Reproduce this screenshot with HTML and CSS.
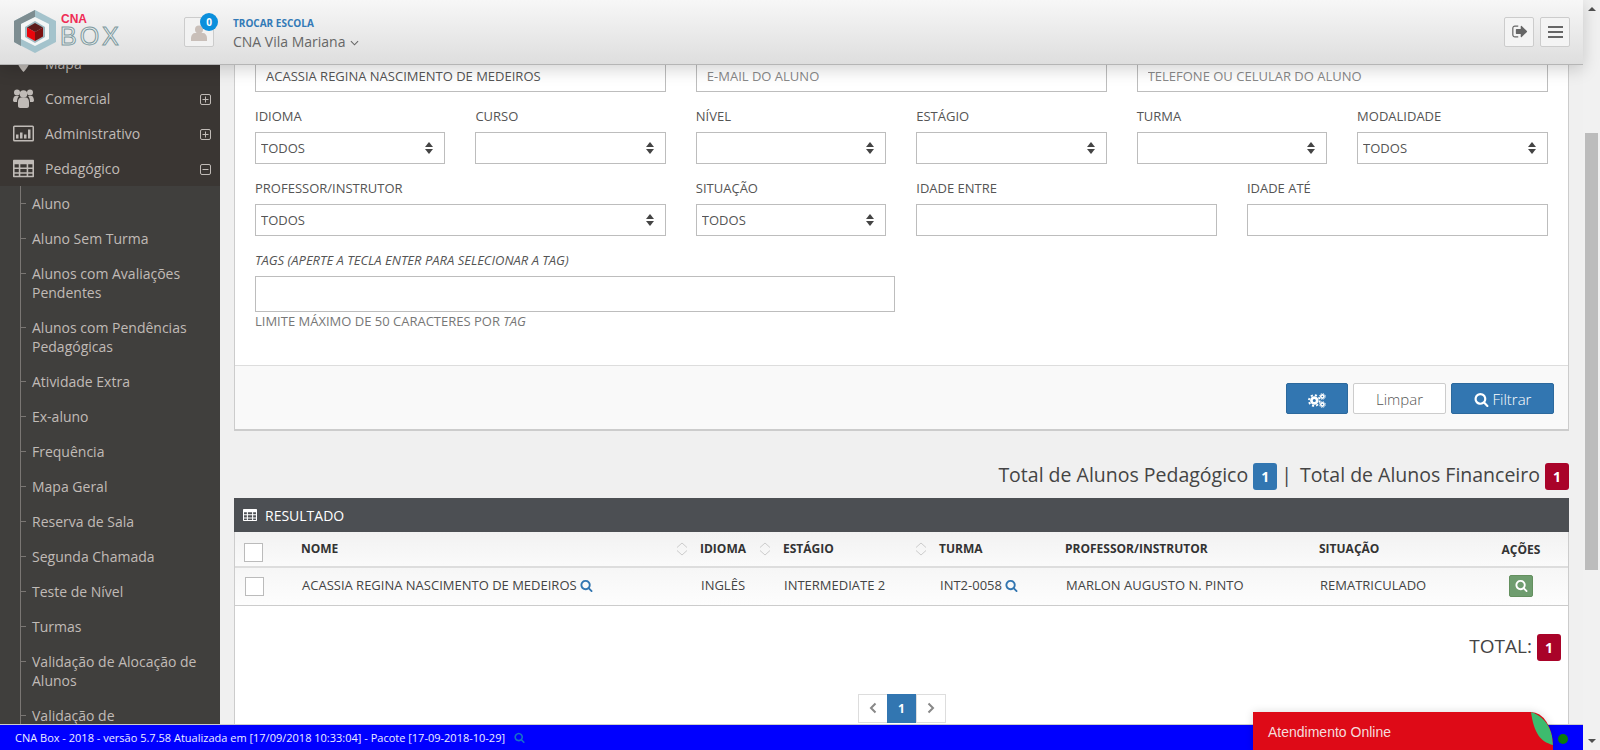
FILE: index.html
```html
<!DOCTYPE html>
<html lang="pt-BR">

<head>
    <meta charset="UTF-8">
    <title>CNA Box</title>
    <link rel="stylesheet" href="styles.css">
</head>

<body>
    <!-- Icon set -->
    <svg class="icon-defs" aria-hidden="true">
        <symbol id="i-search" viewBox="0 0 1792 1792"><path d="M1216 832q0-185-131.500-316.500t-316.500-131.500-316.500 131.500-131.500 316.500 131.500 316.500 316.500 131.500 316.500-131.500 131.500-316.500zm512 832q0 52-38 90t-90 38q-54 0-90-38l-343-342q-179 124-399 124-143 0-273.500-55.500t-225-150-150-225-55.500-273.500 55.500-273.500 150-225 225-150 273.500-55.500 273.500 55.500 225 150 150 225 55.500 273.500q0 220-124 399l343 343q37 37 37 90z"/></symbol>
        <symbol id="i-table" viewBox="0 0 20 17"><path fill-rule="evenodd" d="M1 0h18a1 1 0 0 1 1 1v15a1 1 0 0 1-1 1H1a1 1 0 0 1-1-1V1a1 1 0 0 1 1-1zm.5 4.500v3h4v-3zm5.500 0v3h6v-3zm7.500 0v3h4v-3zm-13 4.500v3h4V9zm5.500 0v3h6V9zm7.500 0v3h4V9zm-13 4.500v2h4v-2zm5.500 0v2h6v-2zm7.500 0v2h4v-2z"/></symbol>
        <symbol id="i-sort" viewBox="0 0 12 14"><path d="M1 5.500 6 1l5 4.500M1 8.500l5 4.500 5-4.500" fill="none" stroke="#ccc"/></symbol>
        <symbol id="i-tree-plus" viewBox="0 0 11 11"><rect x=".5" y=".5" width="10" height="10" rx="1.500" fill="none" stroke="currentColor"/><path d="M2.500 5.500h6M5.500 2.500v6" stroke="currentColor"/></symbol>
        <symbol id="i-tree-minus" viewBox="0 0 11 11"><rect x=".5" y=".5" width="10" height="10" rx="1.500" fill="none" stroke="currentColor"/><path d="M2.500 5.500h6" stroke="currentColor"/></symbol>
    </svg>

    <div class="window">
        <div class="page">
            <header class="topbar">
                <div class="logo">
                    <svg class="logo-mark" viewBox="0 0 42 43">
                        <polygon points="21,0 42,11 42,32 21,43 0,32 0,11" fill="#a4c3cc"/>
                        <polygon points="21,0 0,11 0,32 7,36 7,14 21,7" fill="#7d8d91"/>
                        <polygon points="21,7 35,14 35,29 21,36 7,29 7,14" fill="#f4f6f6"/>
                        <polygon points="21,11 31,17 31,27 21,33 11,27 11,17" fill="#9db8c0"/>
                        <polygon points="21,13 29,17.500 21,22 13,17.500" fill="#5c1c1c"/>
                        <polygon points="13,17.500 21,22 21,31 13,26.500" fill="#e8060c"/>
                        <polygon points="29,17.500 21,22 21,31 29,26.500" fill="#7c1010"/>
                    </svg>
                    <div class="logo-text">
                        <span class="logo-cna">CNA</span>
                        <span class="logo-box">BOX</span>
                    </div>
                </div>
                <div class="avatar">
                    <svg viewBox="0 0 16 16" class="avatar-icon"><circle cx="8" cy="4.500" r="4"/><path d="M0 16v-3c0-3 2-5 4-5h8c2 0 4 2 4 5v3z"/></svg>
                    <span class="avatar-badge">0</span>
                </div>
                <div class="school">
                    <a class="school-link">TROCAR ESCOLA</a>
                    <div class="school-name">CNA Vila Mariana
                        <svg viewBox="0 0 10 6" class="school-caret"><path d="M1 1l4 4 4-4" fill="none" stroke="#666" stroke-width="1.200"/></svg>
                    </div>
                </div>
                <div class="topbar-actions">
                    <button class="top-btn">
                        <svg viewBox="0 0 1664 1792" class="top-icon"><path d="M704 1440q0 4 1 20t.5 26.500-3 23.500-10 19.500-20.500 6.500h-320q-119 0-203.500-84.500t-84.500-203.500v-704q0-119 84.500-203.500t203.500-84.500h320q13 0 22.500 9.500t9.500 22.500q0 4 1 20t.5 26.500-3 23.500-10 19.500-20.500 6.500h-320q-66 0-113 47t-47 113v704q0 66 47 113t113 47h312l11.500 1 11.500 3 8 5.500 7 9 2 13.500zm928-544q0 26-19 45l-544 544q-19 19-45 19t-45-19-19-45v-288h-448q-26 0-45-19t-19-45v-384q0-26 19-45t45-19h448v-288q0-26 19-45t45-19 45 19l544 544q19 19 19 45z"/></svg>
                    </button>
                    <button class="top-btn">
                        <span class="burger"><i></i><i></i><i></i></span>
                    </button>
                </div>
            </header>

            <div class="middle">
                <nav class="sidebar">
                    <ul class="menu">
                        <li class="menu-item">
                            <svg viewBox="0 0 12 16" class="menu-icon pin"><path d="M6 0a6 6 0 0 1 6 6c0 3-4 8-6 10C4 14 0 9 0 6a6 6 0 0 1 6-6z"/></svg>
                            <span class="menu-label">Mapa</span>
                        </li>
                        <li class="menu-item">
                            <svg viewBox="0 0 21 19" class="menu-icon"><circle cx="4" cy="3.500" r="3"/><circle cx="17" cy="3.500" r="3"/><circle cx="10.500" cy="5" r="3.800"/><path d="M0 12c0-3 1-5 2.500-5H6c-1 1-2 3-2 6H1zM21 12c0-3-1-5-2.500-5H15c1 1 2 3 2 6h3zM5 13c0-3 1.500-4.500 3-4.500h5c1.500 0 3 1.500 3 4.500v4c0 1-1 2-2 2H7c-1 0-2-1-2-2z"/></svg>
                            <span class="menu-label">Comercial</span>
                            <svg class="tree-toggle"><use href="#i-tree-plus"/></svg>
                        </li>
                        <li class="menu-item">
                            <svg viewBox="0 0 21 16" class="menu-icon"><path fill-rule="evenodd" d="M1.500 0h18A1.500 1.500 0 0 1 21 1.500v13a1.500 1.500 0 0 1-1.500 1.500h-18A1.500 1.500 0 0 1 0 14.500v-13A1.500 1.500 0 0 1 1.500 0zM1.500 1.500v13h18v-13zM3 9h2.500v4H3zM7 7h2.500v6H7zM11 9h2.500v4H11zM15 4h2.500v9H15z"/></svg>
                            <span class="menu-label">Administrativo</span>
                            <svg class="tree-toggle"><use href="#i-tree-plus"/></svg>
                        </li>
                        <li class="menu-item">
                            <svg viewBox="0 0 20 17" class="menu-icon"><use href="#i-table"/></svg>
                            <span class="menu-label">Pedagógico</span>
                            <svg class="tree-toggle"><use href="#i-tree-minus"/></svg>
                        </li>
                    </ul>
                    <ul class="submenu">
                        <li>Aluno</li>
                        <li>Aluno Sem Turma</li>
                        <li>Alunos com Avaliações Pendentes</li>
                        <li>Alunos com Pendências Pedagógicas</li>
                        <li>Atividade Extra</li>
                        <li>Ex-aluno</li>
                        <li>Frequência</li>
                        <li>Mapa Geral</li>
                        <li>Reserva de Sala</li>
                        <li>Segunda Chamada</li>
                        <li>Teste de Nível</li>
                        <li>Turmas</li>
                        <li>Validação de Alocação de Alunos</li>
                        <li>Validação de</li>
                    </ul>
                </nav>

                <main class="content">
                    <section class="panel filter-panel">
                        <div class="filter-body">
                            <div class="field-row">
                                <div class="field span-4"><input class="text-input" value="ACASSIA REGINA NASCIMENTO DE MEDEIROS"></div>
                                <div class="field span-4"><input class="text-input" placeholder="E-MAIL DO ALUNO"></div>
                                <div class="field span-4"><input class="text-input" placeholder="TELEFONE OU CELULAR DO ALUNO"></div>
                            </div>
                            <div class="field-row">
                                <div class="field span-2"><label>IDIOMA</label><div class="select-wrap"><select><option>TODOS</option></select></div></div>
                                <div class="field span-2"><label>CURSO</label><div class="select-wrap"><select></select></div></div>
                                <div class="field span-2"><label>NÍVEL</label><div class="select-wrap"><select></select></div></div>
                                <div class="field span-2"><label>ESTÁGIO</label><div class="select-wrap"><select></select></div></div>
                                <div class="field span-2"><label>TURMA</label><div class="select-wrap"><select></select></div></div>
                                <div class="field span-2"><label>MODALIDADE</label><div class="select-wrap"><select><option>TODOS</option></select></div></div>
                            </div>
                            <div class="field-row">
                                <div class="field span-4"><label>PROFESSOR/INSTRUTOR</label><div class="select-wrap"><select><option>TODOS</option></select></div></div>
                                <div class="field span-2"><label>SITUAÇÃO</label><div class="select-wrap"><select><option>TODOS</option></select></div></div>
                                <div class="field span-3"><label>IDADE ENTRE</label><input class="text-input"></div>
                                <div class="field span-3"><label>IDADE ATÉ</label><input class="text-input"></div>
                            </div>
                            <div class="tags">
                                <label><em>TAGS (APERTE A TECLA ENTER PARA SELECIONAR A TAG)</em></label>
                                <input class="text-input tags-input">
                                <p class="tags-hint">LIMITE MÁXIMO DE 50 CARACTERES POR <em>TAG</em></p>
                            </div>
                        </div>
                        <div class="filter-footer">
                            <button class="btn btn-primary btn-gears">
                                <svg viewBox="0 0 20 16" class="gears-icon">
                                    <circle cx="7" cy="8" r="3.200" fill="none" stroke="#fff" stroke-width="3"/>
                                    <circle cx="7" cy="8" r="6" fill="none" stroke="#fff" stroke-width="2" stroke-dasharray="2.400 2.300"/>
                                    <circle cx="16" cy="3.500" r="1.800" fill="none" stroke="#fff" stroke-width="1.800"/>
                                    <circle cx="16" cy="3.500" r="3.300" fill="none" stroke="#fff" stroke-width="1" stroke-dasharray="1.300 1.300"/>
                                    <circle cx="16" cy="12.500" r="1.800" fill="none" stroke="#fff" stroke-width="1.800"/>
                                    <circle cx="16" cy="12.500" r="3.300" fill="none" stroke="#fff" stroke-width="1" stroke-dasharray="1.300 1.300"/>
                                </svg>
                            </button>
                            <button class="btn btn-default">Limpar</button>
                            <button class="btn btn-primary btn-filter"><svg class="search-icon"><use href="#i-search"/></svg> Filtrar</button>
                        </div>
                    </section>

                    <div class="totals">
                        <span class="totals-text">Total de Alunos Pedagógico</span>
                        <span class="count count-blue">1</span>
                        <span class="totals-text totals-sep">|</span>
                        <span class="totals-text">Total de Alunos Financeiro</span>
                        <span class="count count-red">1</span>
                    </div>

                    <section class="panel result-panel">
                        <div class="result-title">
                            <svg class="title-icon"><use href="#i-table"/></svg>
                            RESULTADO
                        </div>
                        <table class="result-table">
                            <colgroup>
                                <col class="col-check"><col class="col-name"><col class="col-lang"><col class="col-stage">
                                <col class="col-class"><col class="col-teacher"><col class="col-status"><col class="col-actions">
                            </colgroup>
                            <thead>
                                <tr>
                                    <th class="cell-check"><span class="checkbox"></span></th>
                                    <th class="sortable">NOME<svg class="sort-icon"><use href="#i-sort"/></svg></th>
                                    <th class="sortable">IDIOMA<svg class="sort-icon"><use href="#i-sort"/></svg></th>
                                    <th class="sortable">ESTÁGIO<svg class="sort-icon"><use href="#i-sort"/></svg></th>
                                    <th>TURMA</th>
                                    <th>PROFESSOR/INSTRUTOR</th>
                                    <th>SITUAÇÃO</th>
                                    <th class="cell-center">AÇÕES</th>
                                </tr>
                            </thead>
                            <tbody>
                                <tr>
                                    <td class="cell-check"><span class="checkbox"></span></td>
                                    <td>ACASSIA REGINA NASCIMENTO DE MEDEIROS <svg class="link-icon"><use href="#i-search"/></svg></td>
                                    <td>INGLÊS</td>
                                    <td>INTERMEDIATE 2</td>
                                    <td>INT2-0058 <svg class="link-icon"><use href="#i-search"/></svg></td>
                                    <td>MARLON AUGUSTO N. PINTO</td>
                                    <td>REMATRICULADO</td>
                                    <td class="cell-center"><button class="btn-view"><svg class="view-icon"><use href="#i-search"/></svg></button></td>
                                </tr>
                            </tbody>
                        </table>
                        <div class="grand-total"><span class="totals-text">TOTAL:</span> <span class="count count-red">1</span></div>
                        <div class="pager">
                            <a class="pager-item"><svg viewBox="0 0 8 12" class="pager-arrow"><path d="M6.500 1.500 2 6l4.500 4.500" fill="none" stroke="#888" stroke-width="2"/></svg></a>
                            <a class="pager-item active">1</a>
                            <a class="pager-item"><svg viewBox="0 0 8 12" class="pager-arrow"><path d="M1.500 1.500 6 6l-4.500 4.500" fill="none" stroke="#888" stroke-width="2"/></svg></a>
                        </div>
                    </section>
                </main>
            </div>

            <footer class="statusbar">
                <span>CNA Box - 2018 - versão 5.7.58 Atualizada em [17/09/2018 10:33:04] - Pacote [17-09-2018-10-29]</span>
                <svg class="status-search"><use href="#i-search"/></svg>
                <span class="status-dot"></span>
                <div class="chat-tab">
                    Atendimento Online
                    <svg viewBox="0 0 22 34" class="chat-leaf"><path d="M0 0C12 4 22 15 22 33 10 30 3 22 0 0z" fill="#3dbb6e"/></svg>
                </div>
            </footer>
        </div>

        <div class="scrollbar">
            <span class="scroll-up"></span>
            <div class="scroll-track"><div class="scroll-thumb"></div></div>
            <span class="scroll-down"></span>
        </div>
    </div>
</body>

</html>
```

FILE: styles.css
```css
/* Global Styles */
* {
    box-sizing: border-box;
}

html,
body {
    margin: 0;
    padding: 0;
    height: 750px;
    overflow: hidden;
}

body {
    font-family: 'Open Sans', sans-serif;
    font-size: 13px;
    color: #444;
    background-color: #f0f0f0;
}

ul {
    list-style: none;
    margin: 0;
    padding: 0;
}

.icon-defs {
    display: none;
}

.window {
    display: flex;
    height: 750px;
}

.page {
    display: flex;
    flex-direction: column;
    width: 1583px;
    height: 750px;
}

/* Header */
.topbar {
    position: relative;
    z-index: 5;
    display: flex;
    align-items: center;
    flex: none;
    height: 65px;
    padding: 0 13px 1px 14px;
    background: linear-gradient(to bottom, #f7f7f7, #dedede);
    border-bottom: 1px solid #b5b5b5;
    box-shadow: 0 4px 16px rgba(0, 0, 0, 0.18);
}

.logo {
    display: flex;
    width: 170px;
}

.logo-mark {
    width: 42px;
    height: 43px;
}

.logo-text {
    display: flex;
    flex-direction: column;
    width: 62px;
    margin-left: 4px;
    padding-top: 4px;
}

.logo-cna {
    padding-left: 1px;
    font-family: 'Liberation Sans', sans-serif;
    font-size: 12px;
    font-weight: 700;
    line-height: 10px;
    color: #ef2b55;
}

.logo-box {
    font-family: 'Liberation Sans', sans-serif;
    font-size: 25px;
    line-height: 24px;
    letter-spacing: 3px;
    color: #e9eeee;
    -webkit-text-stroke: 1px #7f9a9f;
}

.avatar {
    position: relative;
    width: 30px;
    height: 30px;
    display: flex;
    align-items: flex-end;
    justify-content: center;
    background-color: #f2f2f2;
    border: 1px solid #ccc;
    border-radius: 2px;
}

.avatar-icon {
    width: 16px;
    height: 16px;
    margin-bottom: 5px;
    fill: #c9bfb9;
}

.avatar-badge {
    position: absolute;
    top: -5px;
    right: -5px;
    width: 18px;
    height: 18px;
    border-radius: 50%;
    background-color: #0b8fdc;
    color: #fff;
    font-size: 10px;
    font-weight: 700;
    line-height: 18px;
    text-align: center;
}

.school {
    margin-left: 19px;
    padding-top: 4px;
}

.school-link {
    display: block;
    font-size: 10px;
    font-weight: 700;
    line-height: 14px;
    color: #337ab7;
}

.school-name {
    margin-top: 2px;
    font-size: 14px;
    line-height: 19px;
    color: #666;
}

.school-caret {
    width: 9px;
    height: 6px;
    margin-left: 1px;
    vertical-align: 1px;
}

.topbar-actions {
    display: flex;
    gap: 6px;
    margin-left: auto;
}

.top-btn {
    display: flex;
    align-items: center;
    justify-content: center;
    width: 30px;
    height: 30px;
    padding: 0;
    background-color: #f4f4f4;
    border: 1px solid #ccc;
    border-radius: 2px;
}

.top-icon {
    width: 17px;
    height: 17px;
    fill: #666;
}

.burger {
    display: flex;
    flex-direction: column;
    gap: 3px;
    width: 15px;
}

.burger i {
    height: 2px;
    background-color: #666;
}

/* Sidebar */
.middle {
    display: flex;
    flex: 1;
    min-height: 0;
}

.sidebar {
    flex: none;
    width: 220px;
    overflow: hidden;
    background-color: #3a3633;
    color: #c0bbb7;
    font-size: 14px;
}

.menu {
    margin-top: -19px;
}

.menu-item {
    position: relative;
    display: flex;
    align-items: center;
    height: 35px;
    padding-left: 13px;
}

.menu-icon {
    width: 21px;
    height: 19px;
    fill: #c0bbb7;
}

.pin {
    height: 16px;
}

.menu-label {
    margin-left: 11px;
}

.tree-toggle {
    position: absolute;
    top: 13px;
    right: 9px;
    width: 11px;
    height: 11px;
    color: #c0bbb7;
}

.submenu {
    background-color: #403f3d;
    padding-left: 20px;
    position: relative;
}

.submenu::before {
    content: "";
    position: absolute;
    top: 0;
    bottom: 0;
    left: 20px;
    width: 1px;
    background-color: #7a7673;
}

.submenu li {
    position: relative;
    padding: 8px 20px 8px 12px;
    line-height: 19px;
}

.submenu li::before {
    content: "";
    position: absolute;
    top: 17px;
    left: 0;
    width: 6px;
    height: 1px;
    background-color: #7a7673;
}

/* Main content */
.content {
    flex: 1;
    min-width: 0;
    overflow: hidden;
    padding: 0 14px;
}

.panel {
    background-color: #fff;
    border: 1px solid #ccc;
    border-top: 0;
}

.filter-panel {
    margin-top: -30px;
    border-bottom: 2px solid #ccc;
}

.filter-body {
    padding: 25px 20.5px 0 20px;
    height: 330px;
}

.field-row {
    display: grid;
    grid-template-columns: repeat(12, 1fr);
    column-gap: 30px;
    margin-bottom: 16px;
}

.span-2 {
    grid-column: span 2;
}

.span-3 {
    grid-column: span 3;
}

.span-4 {
    grid-column: span 4;
}

label {
    display: block;
    height: 19px;
    margin-bottom: 5px;
    font-size: 13px;
    line-height: 17px;
    color: #555;
}

.text-input,
select {
    display: block;
    width: 100%;
    height: 32px;
    border: 1px solid #bdbdbd;
    border-radius: 0;
    background-color: #fff;
    font-family: inherit;
    font-size: 13px;
    color: #555;
    outline: none;
}

.text-input {
    padding: 0 10px;
}

.text-input::placeholder {
    color: #888;
    opacity: 1;
}

select {
    appearance: none;
    padding: 0 5px;
}

.select-wrap {
    position: relative;
}

.select-wrap::before,
.select-wrap::after {
    content: "";
    position: absolute;
    right: 12px;
    border-left: 4px solid transparent;
    border-right: 4px solid transparent;
}

.select-wrap::before {
    top: 10px;
    border-bottom: 5px solid #444;
}

.select-wrap::after {
    top: 17px;
    border-top: 5px solid #444;
}

.tags-input {
    width: 640px;
    height: 36px;
}

.tags-hint {
    margin: 0;
    font-size: 13px;
    line-height: 18px;
    color: #777;
}

.filter-footer {
    display: flex;
    justify-content: flex-end;
    gap: 5px;
    height: 64px;
    padding: 17px 14px 0 0;
    background-color: #f9f9f9;
    border-top: 1px solid #ddd;
}

.btn {
    height: 31px;
    padding: 0;
    border: 1px solid;
    border-radius: 2px;
    font-family: inherit;
    font-size: 15px;
}

.btn-primary {
    background-color: #3276b1;
    border-color: #2c699d;
    color: #fff;
}

.btn-default {
    width: 93px;
    background-color: #fff;
    border-color: #ccc;
    color: #555;
    font-weight: 300;
}

.btn-gears {
    width: 62px;
}

.gears-icon {
    width: 18px;
    height: 15px;
    vertical-align: middle;
}

.btn-filter {
    width: 103px;
    font-weight: 300;
}

.search-icon {
    width: 15px;
    height: 15px;
    fill: #fff;
    vertical-align: -2px;
}

/* Totals */
.totals {
    display: flex;
    justify-content: flex-end;
    align-items: center;
    gap: 5px;
    height: 27px;
    margin: 32px 0 8px;
    font-size: 19.5px;
    color: #444;
}

.totals-text {
    margin-bottom: 5px;
}

.totals-sep {
    margin-left: -1px;
    margin-right: 3px;
}

.count {
    display: inline-block;
    width: 24px;
    height: 27px;
    border-radius: 3px;
    color: #fff;
    font-size: 14px;
    font-weight: 700;
    line-height: 27px;
    text-align: center;
}

.count-blue {
    background-color: #3276b1;
}

.count-red {
    background-color: #a90329;
}

/* Result table */
.result-panel {
    border-bottom: 0;
    height: 300px;
}

.result-title {
    display: flex;
    align-items: center;
    height: 34px;
    margin: 0 -1px;
    padding-left: 9px;
    background-color: #4c4f53;
    color: #fff;
    font-size: 14px;
}

.title-icon {
    width: 14px;
    height: 12px;
    margin-right: 8px;
    fill: #fff;
}

.result-table {
    width: 100%;
    table-layout: fixed;
    border-collapse: collapse;
}

.col-check {
    width: 58px;
}

.col-name {
    width: 399px;
}

.col-lang {
    width: 83px;
}

.col-stage {
    width: 156px;
}

.col-class {
    width: 126px;
}

.col-teacher {
    width: 254px;
}

.col-status {
    width: 163px;
}

.result-table th,
.result-table td {
    padding: 0 0 0 8px;
    font-size: 12px;
    text-align: left;
    white-space: nowrap;
}

.result-table th {
    position: relative;
    height: 35px;
    padding-bottom: 2px;
    font-weight: 700;
    color: #333;
    background: linear-gradient(to bottom, #f2f2f2, #fafafa);
    border-bottom: 2px solid #ddd;
}

.result-table td {
    height: 38px;
    padding-left: 9px;
    padding-bottom: 3px;
    font-size: 13px;
    color: #444;
    background: linear-gradient(to bottom, #f6f6f6, #fdfdfd);
    border-bottom: 1px solid #ccc;
}

.result-table .cell-center {
    padding: 0;
    text-align: center;
}

.result-table .cell-check {
    padding: 0 0 0 9px;
}

.checkbox {
    display: block;
    width: 19px;
    height: 19px;
    background-color: #fff;
    border: 1px solid #bbb;
}

.result-table th .checkbox {
    margin-top: 6px;
}

.result-table td .checkbox {
    margin-left: 1px;
}

.sort-icon {
    position: absolute;
    top: 10px;
    right: 4px;
    width: 12px;
    height: 14px;
}

.link-icon {
    width: 13px;
    height: 13px;
    fill: #3276b1;
    vertical-align: -2px;
}

.btn-view {
    width: 24px;
    height: 22px;
    padding: 0;
    background-color: #6f9d6f;
    border: 1px solid #64905f;
    border-radius: 2px;
    vertical-align: middle;
}

.view-icon {
    width: 13px;
    height: 13px;
    fill: #fff;
    vertical-align: -1px;
}

.grand-total {
    display: flex;
    justify-content: flex-end;
    align-items: center;
    gap: 5px;
    height: 27px;
    margin: 28px 7px 33px 0;
    font-size: 19px;
    color: #444;
}

.grand-total .totals-text {
    margin-bottom: 3px;
}

.pager {
    display: flex;
    justify-content: center;
    margin-left: 1px;
}

.pager-item {
    display: flex;
    align-items: center;
    justify-content: center;
    width: 30px;
    height: 29px;
    margin-left: -1px;
    background-color: #fff;
    border: 1px solid #ddd;
    font-size: 12px;
    font-weight: 700;
}

.pager-item.active {
    background-color: #3276b1;
    border-color: #3276b1;
    color: #fff;
}

.pager-arrow {
    width: 8px;
    height: 12px;
}

/* Status bar */
.statusbar {
    position: relative;
    z-index: 6;
    display: flex;
    align-items: center;
    flex: none;
    height: 26px;
    padding-left: 15px;
    background-color: #0000ff;
    color: #eef;
    font-size: 11px;
    border-top: 1px solid #ccc;
}

.status-search {
    width: 11px;
    height: 11px;
    margin-left: 9px;
    fill: #1670c8;
}

.status-dot {
    position: absolute;
    right: 15px;
    top: 9px;
    width: 10px;
    height: 10px;
    border-radius: 50%;
    background-color: #0a7d0a;
}

.chat-tab {
    position: absolute;
    right: 30px;
    bottom: 0;
    width: 300px;
    height: 38px;
    padding: 12px 0 0 15px;
    overflow: hidden;
    background-color: #de0a17;
    border-top-right-radius: 22px 34px;
    box-shadow: 0 0 8px rgba(0, 0, 0, 0.15);
    color: #f5dcdc;
    font-family: 'Liberation Sans', sans-serif;
    font-size: 14px;
    line-height: 16px;
}

.chat-leaf {
    position: absolute;
    top: 0;
    right: 0;
    width: 22px;
    height: 34px;
}

/* Scrollbar */
.scrollbar {
    display: flex;
    flex-direction: column;
    align-items: center;
    flex: none;
    width: 17px;
    height: 750px;
    background-color: #f1f1f1;
}

.scroll-up,
.scroll-down {
    flex: none;
    width: 0;
    height: 0;
    border-left: 4px solid transparent;
    border-right: 4px solid transparent;
}

.scroll-up {
    margin-top: 7px;
    border-bottom: 4px solid #505050;
}

.scroll-down {
    margin-bottom: 7px;
    border-top: 4px solid #505050;
}

.scroll-track {
    flex: 1;
    width: 100%;
}

.scroll-thumb {
    width: 13px;
    height: 437px;
    margin: 122px auto 0;
    background-color: #bcbcbc;
}
```
